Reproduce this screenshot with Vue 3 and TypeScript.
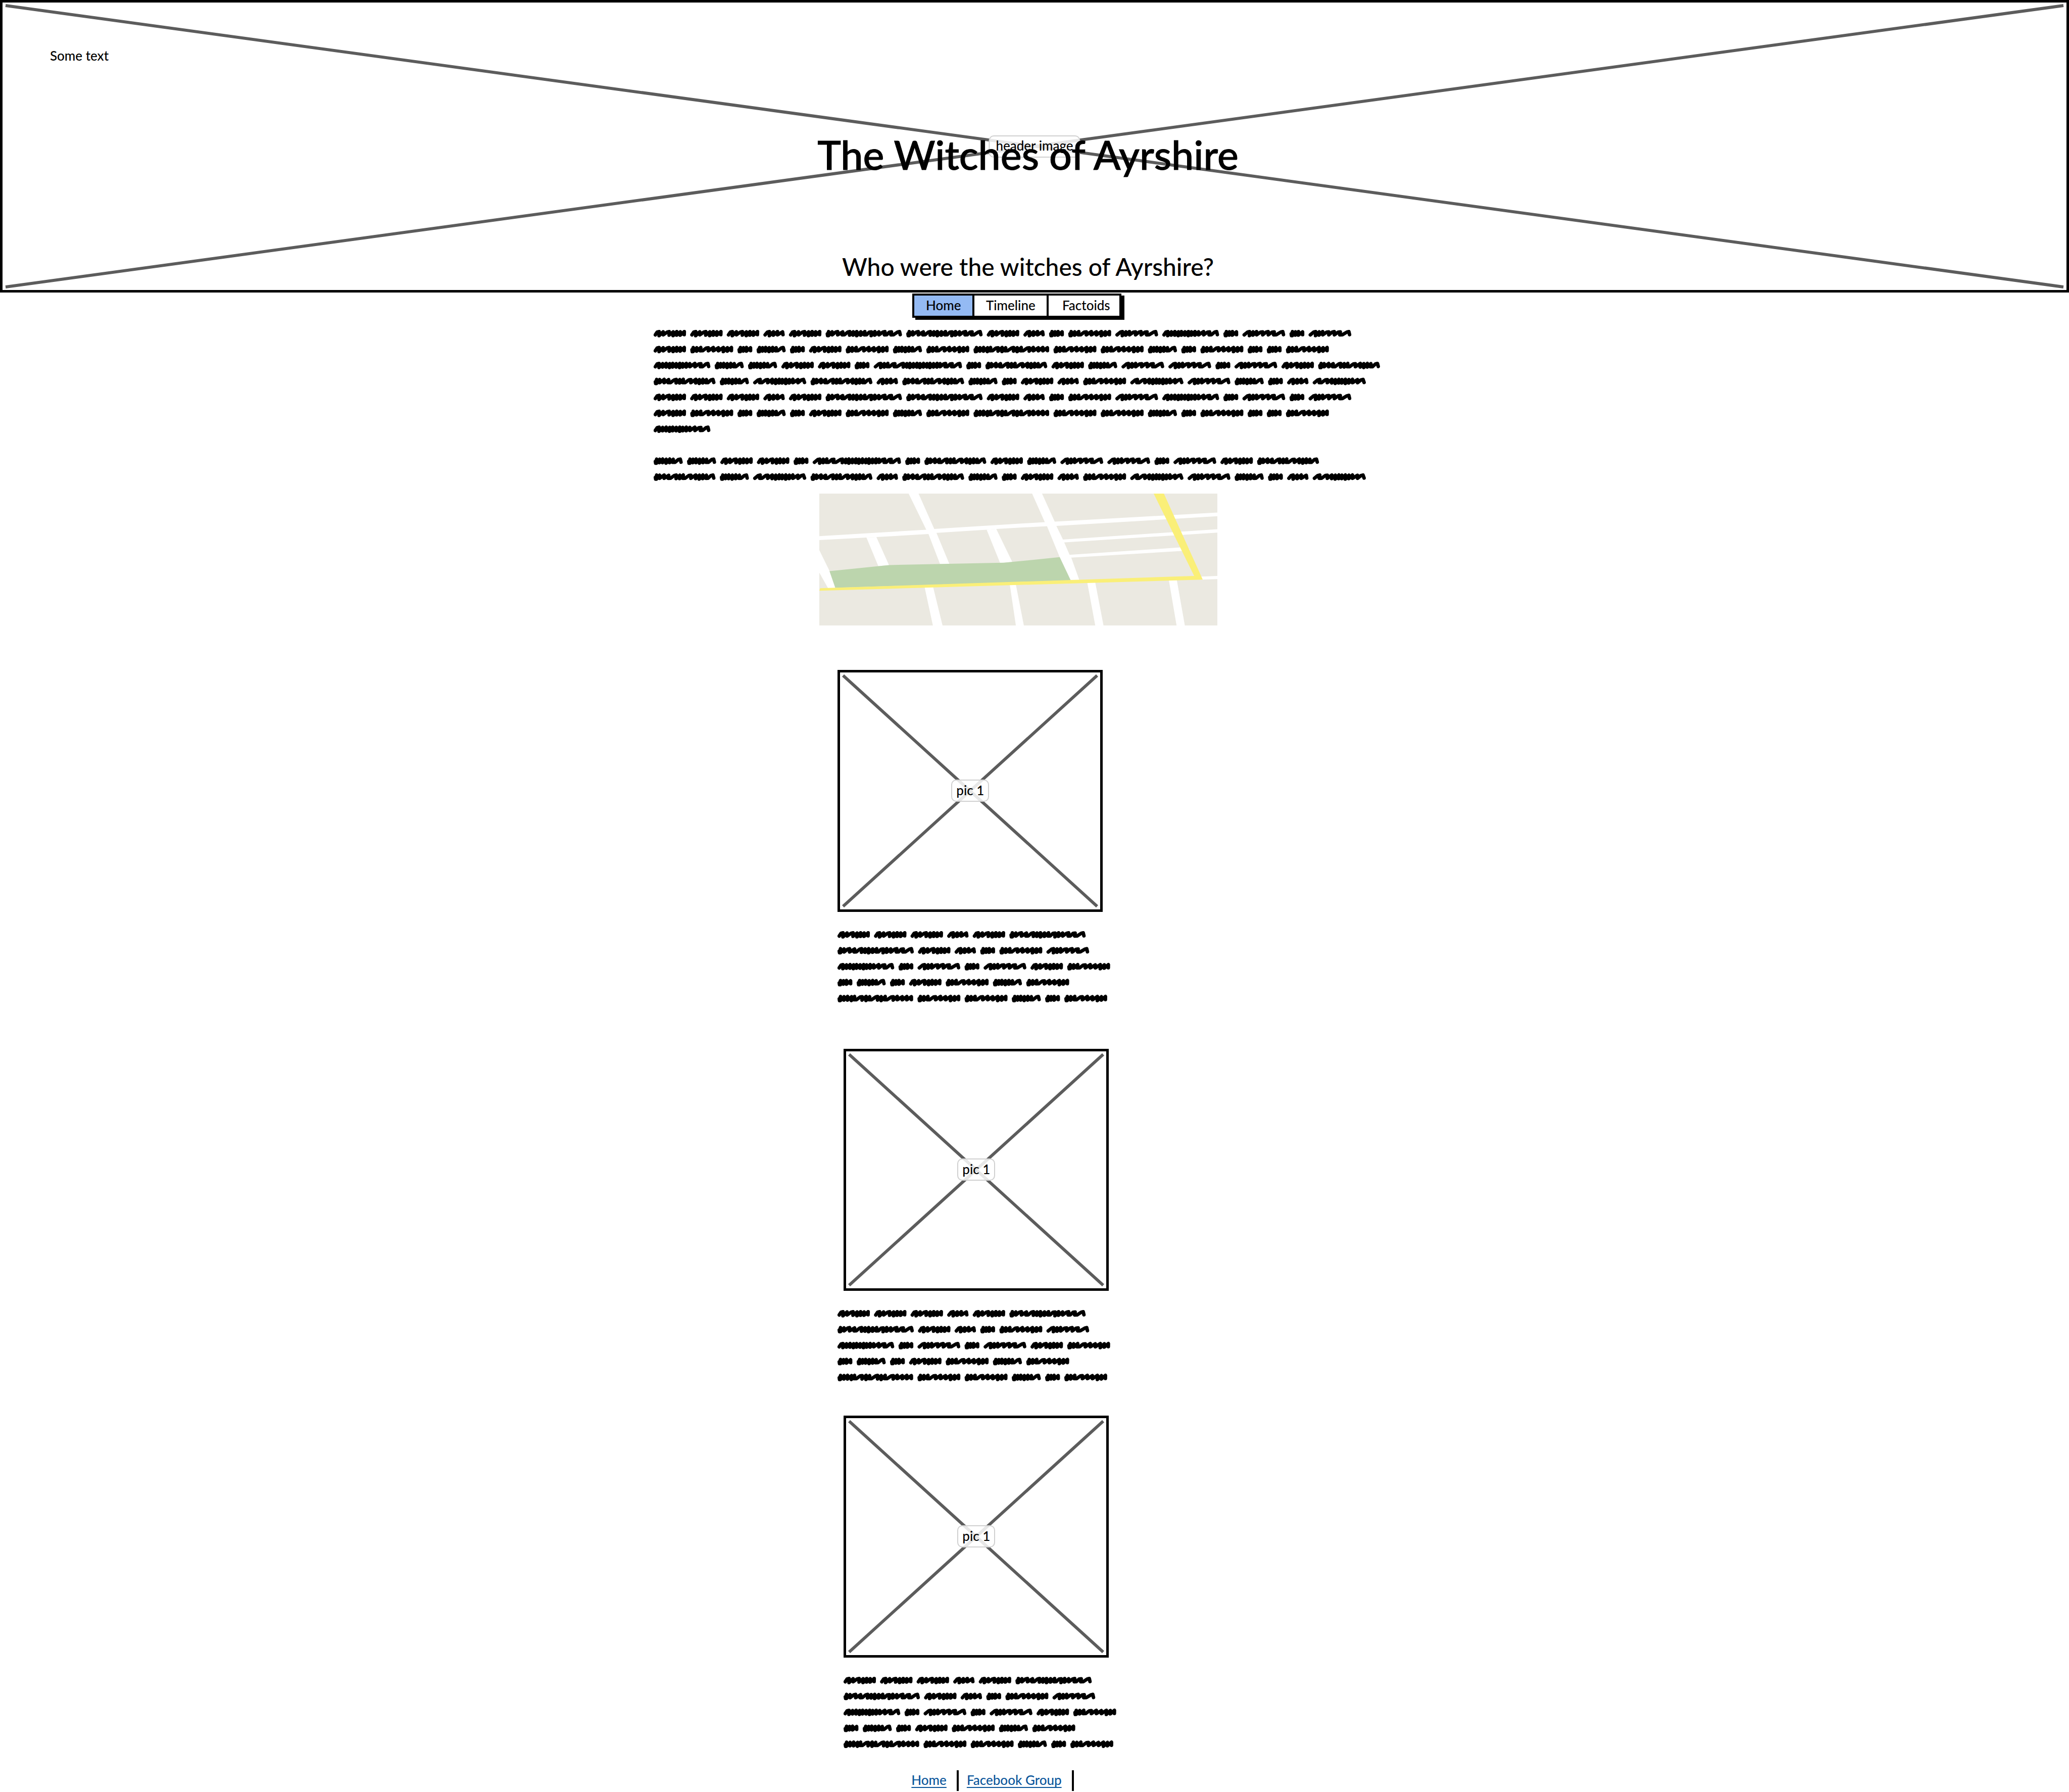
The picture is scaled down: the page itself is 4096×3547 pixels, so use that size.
<script setup lang="ts">
import { ref } from 'vue'

interface Word {
  width: number
  peaks: number[]
}

// Scribbled filler words: overall width and the x position of each upstroke.
const words: Record<string, Word> = {
  A: { width: 64.4, peaks: [11, 19, 31, 39, 46, 53, 61] },
  B: { width: 58, peaks: [6, 12, 18, 25, 32, 39, 53] },
  C: { width: 42.5, peaks: [12, 20, 28, 38] },
  D: { width: 152, peaks: [6, 13, 24, 34, 48, 55, 62, 70, 78, 91, 98, 106, 118, 131, 147] },
  E: { width: 29.7, peaks: [6, 12, 18, 26] },
  F: { width: 85.5, peaks: [6, 13, 21, 36, 46, 56, 66, 74, 82] },
  G: { width: 85, peaks: [14, 21, 28, 40, 51, 63, 80] },
  H: { width: 113, peaks: [11, 18, 25, 32, 38, 45, 52, 58, 65, 72, 82, 94, 108] },
  I: { width: 150.7, peaks: [6, 13, 20, 28, 34, 49, 57, 64, 80, 87, 95, 111, 119, 129, 138, 147] },
  J: { width: 123.2, peaks: [6, 12, 21, 30, 45, 52, 59, 74, 84, 91, 98, 105, 118] },
  K: { width: 105.7, peaks: [14, 29, 38, 45, 52, 58, 65, 72, 79, 89, 100] },
  L: { width: 175.6, peaks: [14, 21, 28, 42, 59, 66, 72, 79, 86, 92, 99, 106, 112, 119, 126, 132, 143, 156, 171] },
}

const gap = 8.4
const pitch = 31.7

function wordPath(word: Word, x0: number, y0: number): string {
  const pts: [number, number][] = []
  const p = word.peaks
  if (p[0] < 10) pts.push([3.5, 8], [4, 11.4])
  else pts.push([3.4, 9.8])
  p.forEach((x, i) => {
    const before = i ? x - p[i - 1] : x
    if (before >= 11) pts.push([x - 4, 4.4])
    pts.push([x, i % 2 ? 3.9 : 3.4])
    if (i < p.length - 1) {
      const g = p[i + 1] - x
      if (g >= 13) pts.push([x - 1, 9.8], [x + g * 0.25, 9.6])
      else pts.push([x + g * 0.1 - 1, g <= 8 ? (i % 3 ? 10.4 : 11.4) : 9.8])
    }
  })
  pts.push([word.width - 3.6, 9.4])
  return 'M' + pts.map(([x, y]) => `${(x + x0).toFixed(1)} ${(y + y0).toFixed(1)}`).join('L')
}

function scribble(lines: string[]): string {
  return lines
    .map((line, row) => {
      let x = 0
      return [...line]
        .map((key) => {
          const d = wordPath(words[key], x, row * pitch)
          x += words[key].width + gap
          return d
        })
        .join('')
    })
    .join('')
}

const opening = ['AAACADDACEFGHEGEG', 'AFEBEAFBFIFFBEFEEF']
const introPath = scribble([
  ...opening,
  'HBBAAELEJABGGEGAJ',
  'JBKJCJBEACFKGBECK',
  ...opening,
  'H',
  '',
  'BBAAELEJABGGEGAJ',
  'JBKJCJBEACFKGBECK',
])
const captionPath = scribble(['AAACAD', 'DACEFG', 'HEGEGAF', 'EBEAFBF', 'IFFBEF'])

const tabs = ['Home', 'Timeline', 'Factoids']
const active = ref('Home')

const pictures = [
  { id: 1, label: 'pic 1' },
  { id: 2, label: 'pic 1' },
  { id: 3, label: 'pic 1' },
]
</script>

<template>
  <div class="page">
    <header class="hero">
      <svg class="cross" aria-hidden="true">
        <line x1="0" y1="0" x2="100%" y2="100%" />
        <line x1="0" y1="100%" x2="100%" y2="0" />
      </svg>
      <span class="tag hero-tag">header image</span>
      <p class="note">Some text</p>
      <h1>The Witches of Ayrshire</h1>
      <h2>Who were the witches of Ayrshire?</h2>
    </header>

    <main class="column">
      <nav class="tabs">
        <button
          v-for="tab in tabs"
          :key="tab"
          type="button"
          :class="['tab', tab.toLowerCase(), { active: tab === active }]"
          @click="active = tab"
        >
          {{ tab }}
        </button>
      </nav>

      <svg class="scribble intro" viewBox="0 0 1448 300" aria-hidden="true">
        <path :d="introPath" />
      </svg>

      <svg class="map" viewBox="55 66 1444 786" preserveAspectRatio="none" role="img" aria-label="Map">
        <rect x="55" y="66" width="1444" height="786" fill="#ebe9e1" />
        <g fill="#fff">
          <path d="M55 320L443 281L472 277L873 236L909 233L1499 179V201L915 259L881 260L697 277L662 281L480 300L451 307L262 325L226 328L55 343Z" />
          <path d="M379 66H415L472 277L480 300L527 486H493L451 307L443 281Z" />
          <path d="M827 66H863L909 233L915 259L939 340L963 431L969 448L998 580H966L927 445L881 260L873 236Z" />
          <path d="M226 328L262 325L308 493L269 498Z" />
          <path d="M662 281L697 277L755 473L711 480Z" />
          <path d="M55 403L92 527L113 628L88 634L55 537Z" />
          <path d="M937 340L1499 278V299L940 357Z" />
          <path d="M961 431L1372 386L1400 400L1372 408L968 448Z" />
          <path d="M1440 561L1499 557V576L1440 579Z" />
          <path d="M437 624H468L502 852H467Z" />
          <path d="M746 608H768L797 852H768Z" />
          <path d="M1027 595H1056L1086 852H1056Z" />
          <path d="M1323 582H1352L1381 852H1351Z" />
        </g>
        <path fill="#bcd5ad" d="M92 528L308 492L725 478L927 445L967 583L113 628Z" />
        <path fill="#faef78" d="M1268 66H1305L1446 579L55 645L58 630L1415 557Z" />
      </svg>

      <section v-for="pic in pictures" :key="pic.id" :class="['entry', `entry-${pic.id}`]">
        <figure class="picture">
          <svg class="cross" aria-hidden="true">
            <line x1="0" y1="0" x2="100%" y2="100%" />
            <line x1="0" y1="100%" x2="100%" y2="0" />
          </svg>
          <figcaption class="tag">{{ pic.label }}</figcaption>
        </figure>
        <svg class="scribble caption" viewBox="0 0 550 142" aria-hidden="true">
          <path :d="captionPath" />
        </svg>
      </section>

      <footer class="links">
        <span class="link-cell"><a href="#home">Home</a></span>
        <span class="link-cell"><a href="#group">Facebook Group</a></span>
      </footer>
    </main>
  </div>
</template>

<style>
body {
  margin: 0;
  background: #fff;
}
</style>

<style scoped>
.page {
  color: #000;
  font-family: Lato, "Liberation Sans", sans-serif;
  font-size: 26px;
  font-weight: 500;
  line-height: 32px;
}

.hero {
  position: relative;
  box-sizing: border-box;
  padding: 89px 26px 17px 94px;
  border: 5px solid #000;
}

.cross {
  position: absolute;
  inset: 6px;
  width: calc(100% - 12px);
  height: calc(100% - 12px);
  overflow: visible;
}

.cross line {
  stroke: #5c5c5c;
  stroke-width: 6px;
}

.tag {
  box-sizing: border-box;
  padding: 3px 8px 5px;
  border: 2px solid #d0d0d0;
  border-radius: 10px;
  background: rgba(255, 255, 255, 0.85);
  white-space: nowrap;
}

.hero-tag {
  position: absolute;
  top: 50%;
  left: 50%;
  padding: 2px 12px 6px;
  transform: translate(-50%, -50%);
}

.note,
h1,
h2 {
  position: relative;
  margin: 0;
  font-weight: 500;
}

h1,
h2 {
  margin-left: -94px;
  text-align: center;
}

h1 {
  margin-top: 132px;
  font-size: 79px;
  line-height: 96px;
  -webkit-text-stroke: 1px #000;
}

h2 {
  margin-top: 145px;
  font-size: 48px;
  line-height: 58px;
}

.column {
  display: flex;
  flex-direction: column;
  align-items: flex-start;
  padding-left: 31.6%;
}

.tabs {
  display: flex;
  margin: 2px 0 24px 512px;
  border: 4px solid #000;
  box-shadow: 6px 4px 0 #000;
}

.tab {
  box-sizing: border-box;
  height: 40px;
  padding: 0 0 2px;
  border: 0;
  background: #fff;
  color: #000;
  font: inherit;
}

.tab + .tab {
  border-left: 4px solid #000;
}

.tab.active {
  background: #94baf3;
}

.home {
  width: 115px;
}

.timeline {
  width: 147px;
}

.factoids {
  width: 144px;
  padding-left: 8px;
}

.scribble {
  display: block;
  fill: none;
  stroke: #000;
  stroke-width: 7px;
  stroke-linecap: round;
  stroke-linejoin: round;
}

.intro {
  width: 1441px;
}

.map {
  display: block;
  width: 788px;
  height: 261px;
  margin: 25px 0 0 328px;
}

.entry {
  display: flex;
  flex-direction: column;
  gap: 38px;
  margin-left: 364px;
}

.entry-1 {
  margin-top: 88px;
}

.entry-2 {
  margin-top: 92px;
}

.entry-3 {
  margin-top: 68px;
  margin-left: 376px;
}

.picture {
  position: relative;
  display: flex;
  align-items: center;
  justify-content: center;
  box-sizing: border-box;
  width: 525px;
  height: 479px;
  margin: 0;
  border: 5px solid #000;
}

.picture .tag {
  position: relative;
}

.entry-2 .picture {
  margin-left: 12px;
}

.caption {
  width: 547px;
}

.links {
  display: flex;
  margin: 44px 0 0 510px;
}

.link-cell {
  padding: 3px 20px 6px 0;
  border-right: 4px solid #000;
}

.link-cell + .link-cell {
  padding-left: 16px;
}

a {
  color: #0b569b;
  text-decoration-thickness: 2px;
  text-underline-offset: 4px;
}
</style>
